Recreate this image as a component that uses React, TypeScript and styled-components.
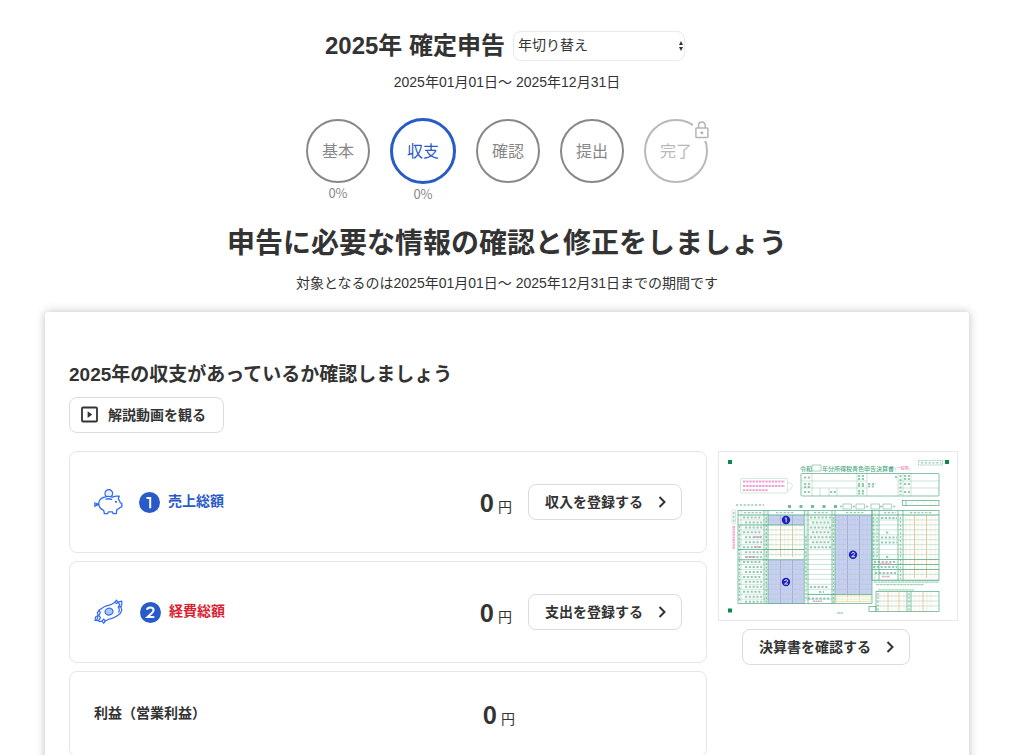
import React from "react";
import styled, { createGlobalStyle, css } from "styled-components";

const GlobalStyle = createGlobalStyle`
  *, *::before, *::after { box-sizing: border-box; }
  body {
    margin: 0;
    background: #fff;
    color: #333;
    font-family: "Liberation Sans", "Noto Sans CJK JP", sans-serif;
    font-size: 14px;
    line-height: 20px;
  }
  h1, h2, h3, p { margin: 0; }
`;

const Shell = styled.div`
  height: 100vh;
  overflow-y: auto;
  scrollbar-width: none;
  padding: 30px 57px 32px 45px;
`;

const Header = styled.header`
  display: flex;
  flex-direction: column;
  align-items: center;
`;

const TitleRow = styled.div`
  display: flex;
  align-items: center;
  gap: 8px;
  padding-right: 4px;
`;

const PageTitle = styled.h1`
  font-size: 24px;
  line-height: 32px;
  font-weight: 700;
`;

const SelectWrap = styled.div`
  position: relative;
  display: flex;
  width: 172px;
`;

const YearSelect = styled.select`
  appearance: none;
  width: 100%;
  height: 30px;
  padding: 0 16px 2px 4px;
  border: 1px solid #e9e9e9;
  border-radius: 8px;
  background: #fff;
  color: #333;
  font: inherit;
`;

const SelectArrows = styled.svg`
  position: absolute;
  right: 2px;
  top: 10px;
  pointer-events: none;
`;

const Period = styled.p`
  margin-top: 10px;
`;

const Steps = styled.ol`
  display: flex;
  justify-content: center;
  gap: 20px;
  height: 86px;
  margin: 26px 0 0;
  padding: 0;
  list-style: none;
`;

type StepState = "done" | "active" | "locked";

const StepItem = styled.li<{ $state: StepState }>`
  position: relative;
  display: flex;
  flex-direction: column;
  align-items: center;
  padding-top: ${(p) => (p.$state === "active" ? 0 : 1)}px;
  color: ${(p) => (p.$state === "locked" ? "#b9b9b9" : "#888")};
  font-family: "Noto Sans CJK JP", sans-serif;
  font-size: 13px;
`;

const StepCircle = styled.button<{ $state: StepState }>`
  width: 64px;
  height: 64px;
  padding: 0 0 2px;
  border: 2px solid currentColor;
  border-radius: 50%;
  background: #fff;
  color: inherit;
  font-family: inherit;
  font-size: 16px;
  ${(p) =>
    p.$state === "active" &&
    css`
      width: 66px;
      height: 66px;
      border-width: 3px;
      color: #285ac8;
    `}
`;

const LockBadge = styled.span`
  position: absolute;
  top: 3px;
  right: -2px;
  display: flex;
  padding: 0 1px 2px 2px;
  border-radius: 4px;
  background: #fff;
`;

const Lead = styled.h2`
  margin-top: 20px;
  font-size: 28px;
  line-height: 40px;
  font-weight: 700;
`;

const LeadNote = styled.p`
  margin-top: 9px;
`;

const Card = styled.main`
  margin-top: 19px;
  padding: 49px 11px 40px 24px;
  border-radius: 3px;
  background: #fff;
  box-shadow: 0 0 10px rgba(0, 0, 0, 0.25);
`;

const SectionTitle = styled.h3`
  font-size: 19px;
  line-height: 28px;
  font-weight: 700;
`;

const OutlineButton = styled.button<{ $video?: boolean }>`
  display: inline-flex;
  align-items: center;
  gap: 7px;
  height: 36px;
  padding: ${(p) => (p.$video ? "0 17px 0 9px" : "0 7px 0 16px")};
  border: 1px solid #dcdcdc;
  border-radius: 8px;
  background: #fff;
  color: #333;
  font-family: inherit;
  font-size: 14px;
  font-weight: 700;
  white-space: nowrap;
`;

const ButtonText = styled.span`
  padding-bottom: 2px;
`;

const VideoLine = styled.div`
  margin-top: 8px;
  display: flex;
`;

const Columns = styled.div`
  display: flex;
  align-items: flex-start;
  gap: 11px;
  margin-top: 18px;
`;

const Summary = styled.div`
  flex: 1;
  display: flex;
  flex-direction: column;
  gap: 8px;
`;

const SummaryRow = styled.section<{ $short?: boolean }>`
  display: flex;
  align-items: center;
  min-height: ${(p) => (p.$short ? 86 : 102)}px;
  padding: 0 24px;
  border: 1px solid #e6e6e6;
  border-radius: 8px;
`;

const RowIcon = styled.svg`
  flex: none;
  margin-right: 16px;
`;

const NumberBadge = styled.svg`
  flex: none;
  margin-right: 8px;
`;

const RowLabel = styled.span<{ $color: string }>`
  flex: 1;
  padding-bottom: 2px;
  color: ${(p) => p.$color};
  font-weight: 700;
`;

const Amount = styled.p<{ $last?: boolean }>`
  display: flex;
  align-items: baseline;
  gap: 4px;
  margin-right: ${(p) => (p.$last ? 167 : 16)}px;
`;

const AmountValue = styled.strong`
  font-family: "Noto Sans CJK JP", sans-serif;
  font-size: 24px;
  line-height: 32px;
`;

const Preview = styled.aside`
  flex: none;
  width: 240px;
`;

const PreviewFrame = styled.div`
  display: flex;
  height: 170px;
  border: 1px solid #e8e8e8;
`;

const PreviewAction = styled.div`
  margin-top: 8px;
  padding-left: 24px;
`;

const Chevron = () => (
  <svg width="24" height="24" viewBox="0 0 24 24" aria-hidden="true">
    <path d="M9.5 7l5 5-5 5" fill="none" stroke="#333" strokeWidth="2" />
  </svg>
);

const PlayBox = () => (
  <svg width="22" height="22" viewBox="0 0 22 22" aria-hidden="true">
    <rect x="3" y="3.5" width="15" height="14" rx="1" fill="none" stroke="#333" strokeWidth="1.8" />
    <path d="M8.6 7.2v6.8l4.6-3.4z" fill="#333" />
  </svg>
);

const Lock = () => (
  <svg width="14" height="18" viewBox="0 0 14 18" fill="none" stroke="#b5b5b5" strokeWidth="1.5" aria-hidden="true">
    <rect x="0.9" y="7" width="12" height="9.6" rx="0.8" />
    <path d="M3.6 7V4.2a3.300 3.300 0 0 1 6.600 0V7" />
    <circle cx="6.900" cy="11.800" r="1.500" fill="#b5b5b5" stroke="none" />
  </svg>
);

const PiggyIcon = () => (
  <RowIcon width="29" height="28" viewBox="0 0 29 28" fill="none" stroke="#2f6bee" strokeWidth="1.300" strokeLinejoin="round" strokeLinecap="round" aria-hidden="true">
    <path d="M12.100 8.200a3.800 3.800 0 1 1 5.400 0" fill="#eaf1ff" />
    <path d="M11.200 8.800c2.400-.7 4.700-.6 7.400.3 1.800-1 4.200-1.200 6.700-.9-.8 1.100-1 2.200-.7 3.400 1 .9 1.400 2 1.700 3.200l1.500.5v3.600c-1.300.2-2.200.8-3 1.500-.6.6-1.200 1.100-2 1.500l-.5 3.700h-3.200l-.7-1.800h-3.900l-.8 1.800h-3.300l-.7-3.200C6.500 21 4.700 18.800 4.700 15.800c0-3.500 2.700-6.100 6.500-7z" />
    <path d="M12 11.200c1.800-.6 3.700-.6 5.600.2M4.700 16.600c-1.500.5-2.600.1-2.400-.8.3-.9 1.600-.3.800.9-.5.900-1.300 1.300-2.300 1.200M.9 14.600v3.800" />
    <circle cx="22" cy="13.800" r="1.100" fill="#2f6bee" stroke="none" />
  </RowIcon>
);

const MoneyIcon = () => (
  <RowIcon width="30" height="28" viewBox="0 0 30 28" fill="none" stroke="#2f6bee" strokeWidth="1.200" strokeLinejoin="round" strokeLinecap="round" aria-hidden="true">
    <path d="M5 12.300C8.700 9.700 9.900 8.500 13 7.700c3.700-.7 5.300-.9 7.700-3.300.8-1 1.200-1.500 1.700-2.300l1.700 2 3.700-1v3.500l-.9 2 .9 3.700-1.400 3c-3.200 2.600-4.600 4-7.700 4.800-3.500.8-5.300 1.300-7.700 3.200L9.800 25.300l-1.700-2.100-2.900.5-.9-1.500-3.300.3.600-3.500 2.700-1.800-1-2.300z" />
    <path d="M5 12.300l1.300 2.300-1.400 2.900 1.500 2.100-1.500 2.500M4.100 18l-1.200 3.400M8.100 23.200l1.600-2.200 1.500 2.100M20.700 4.400l2 1.200 1.400-1.500 1.600 2.500-1.500 2.400 1.200 2.400-.6 3M24.600 9.100l2.300-.5" />
    <ellipse cx="15" cy="13.600" rx="4" ry="3.400" fill="#a9c5fa" transform="rotate(-12 15 13.600)" />
  </RowIcon>
);

const Badge = ({ n }: { n: number }) => (
  <NumberBadge width="21" height="21" viewBox="0 0 21 21" role="img" aria-label={String(n)}>
    <circle cx="10.500" cy="10.500" r="10.500" fill="#285ac8" />
    {n === 1 ? (
      <path d="M7.500 6h3.700v10.300" fill="none" stroke="#fff" strokeWidth="2" />
    ) : (
      <path d="M6.900 7.700c.3-1.400 1.600-2.300 3.400-2.300 2 0 3.300 1 3.300 2.700 0 1.400-.8 2.300-2.300 3.500l-3.700 3.400h6.700" fill="none" stroke="#fff" strokeWidth="2" />
    )}
  </NumberBadge>
);

const GREEN = "#4fa981";
const PALE = "#a5d3bd";
const ORANGE = "#f6dcb8";
const PINK = "#f27cc0";

const range = (from: number, to: number, step: number) => {
  const out: number[] = [];
  for (let v = from; v <= to + 0.01; v += step) out.push(v);
  return out;
};

const hLines = (ys: number[], x1: number, x2: number) => ys.map((y) => `M${x1} ${y}H${x2}`).join("");
const vLines = (xs: number[], y1: number, y2: number) => xs.map((x) => `M${x} ${y1}V${y2}`).join("");

const FormDrawing = () => (
  <svg width="100%" height="100%" viewBox="1 1 238 168" fill="none" role="img" aria-label="青色申告決算書">
    <g fill="#0b8a4a">
      <rect x="10" y="9" width="4" height="4" />
      <rect x="227" y="9" width="4" height="4" />
      <rect x="10" y="157.500" width="4" height="4" />
    </g>

    <g fill={GREEN} fontSize="6" fontWeight="500" fontFamily="Noto Sans CJK JP, sans-serif">
      <text x="82" y="19.500">令和</text>
      <text x="104" y="19.500">年分所得税青色申告決算書</text>
      <text x="177" y="18.800" fontSize="4" fill={PINK}>(一般用)</text>
    </g>

    <g fill="#c9cff3">
      <rect x="50" y="64" width="36" height="10" />
      <rect x="50" y="109" width="36" height="44" />
      <rect x="117" y="64" width="37" height="79" />
    </g>

    <path
      stroke={ORANGE}
      strokeWidth="0.500"
      d={
        vLines([50.8, 54, 58, 66.500, 70, 78, 82], 74, 106) +
        vLines([120, 124, 133, 137, 145, 149], 144, 151) +
        vLines([188, 192, 200, 204, 213, 217], 64, 127) +
        vLines([162, 166, 174, 178, 186, 197, 201, 209, 213], 141, 160) +
        vLines([194, 200, 206, 212, 217], 50, 54)
      }
    />
    <path stroke="#f0b878" strokeWidth="0.800" d={vLines([62.500, 74.500], 74, 106) + vLines([129.500, 141.500], 144, 151) + vLines([196.500, 208.500], 64, 127) + vLines([170, 181, 205], 141, 160)} />
    <path stroke="#a49bc4" strokeWidth="0.700" d={vLines([62.500, 74.500], 64, 74) + vLines([62.500, 74.500], 109, 153) + vLines([129.500, 141.500], 64, 143)} />
    <path stroke="#bcc0e8" strokeWidth="0.400" d={vLines([54, 58, 66, 70, 78, 82], 109, 153) + vLines([121, 125, 133, 137, 145, 149], 64, 143)} />

    <path
      stroke={PALE}
      strokeWidth="0.600"
      d={
        hLines(range(64, 153, 4.950), 20, 86) +
        hLines(range(64, 149, 4.950), 88, 154) +
        hLines(range(64, 129, 4.950), 154, 221) +
        hLines([145, 150, 155], 158, 221) +
        hLines([30, 37], 83, 149) +
        hLines([30, 37], 180, 221) +
        vLines([23, 48], 59, 153) +
        vLines([88, 157], 59, 129) +
        vLines([94, 139, 149, 180, 185, 193], 22, 45) +
        "M111 37V45M119 37V45M102 37V45"
      }
    />
    <g stroke={GREEN} strokeWidth="0.700">
      <rect x="20" y="59.500" width="134" height="93" />
      <rect x="154" y="59.500" width="67" height="70" />
      <rect x="83" y="22.500" width="138" height="22.500" rx="1" />
      <rect x="158" y="140.500" width="63" height="20" />
      <rect x="151" y="155.500" width="7" height="5" />
      <rect x="184.500" y="49.500" width="36.500" height="5" />
      <rect x="94" y="14" width="9" height="6" strokeWidth="0.500" />
      <path
        d={
          hLines([64], 20, 221) +
          hLines([74, 98.500, 108.800], 20, 86) +
          hLines([143.500], 90, 154) +
          hLines([108.500, 113.500, 118.500], 154, 221) +
          vLines([46, 50, 86.300], 59.500, 152.500) +
          vLines([90, 114, 117], 59.500, 152.500) +
          vLines([161, 180, 185], 59.500, 129) +
          vLines([189, 193], 140.500, 160.500) +
          "M188 49.500V54.500"
        }
      />
    </g>
    <rect x="118" y="145" width="35" height="5.500" fill="#fffbe8" fillOpacity="0.500" stroke="#d8cf7c" strokeWidth="0.500" />

    <g stroke={GREEN} strokeWidth="0.500">
      <rect x="125" y="53" width="8.500" height="5" />
      <rect x="138" y="53" width="8.500" height="5" />
      <rect x="153" y="53" width="8.500" height="5" />
      <rect x="165" y="53" width="8.500" height="5" />
      <rect x="200.500" y="9.500" width="24" height="4.500" strokeDasharray="2 0.600" />
      <rect x="14" y="59" width="3.500" height="14" rx="1" stroke={PALE} />
      <path stroke={PALE} d="M24 27.500h44q1.500 0 1.500 1.500v11.500q0 1.500-1.500 1.500H24q-1.500 0-1.500-1.500V29q0-1.500 1.500-1.500M69.500 31.500q4.500 0 5 3-.5 4-5 5.500" />
    </g>

    <g stroke={GREEN} strokeWidth="2" strokeDasharray="2.200 1.600" opacity="0.600">
      <path d={range(66.500, 151, 4.950).map((y, i) => `M${i % 3 === 0 ? 25 : 27} ${y}H44`).join("")} />
      <path d={range(66.500, 100, 4.950).map((y, i) => `M${i % 2 ? 94 : 92} ${y}H113`).join("")} />
      <path d="M92 136H110M101 141H106M90 147.500H113M163 67H179M168 81.500H172M163 86.500H179M163 91.500H179M168 106H172M156 111H179M155 116H179M157 122H178" />
      <path d="M26 61.700H44M58 61.700H76M96 61.700H110M128 61.700H146M166 61.700H178M192 61.700H214" strokeWidth="1.200" />
      <path d="M86 26.500H92M86 33H92M86 36H92M86 41H92M112 41H118M140 25H147M140 28H147M140 33H147M140 35H147M140 40H147M140 42.500H147M150 33H158M150 35.500H156M177 26H179M186 25H192M186 28H192M186 33H192M186 41H192M182.500 24V44" />
      <path d="M203 11.800H223M122 55.500H124M135 55.500H137M148 55.500H152M162 55.500H165M175 55.500H178M18 54H46" strokeWidth="1.300" />
      <path d="M48.300 66V152M115.500 66V152M182.500 66V128M159 66V108M155.500 66V108M191 142V160M160 142V160M15.800 61V72M21.500 75V150M88 85V150" strokeWidth="1.300" />
    </g>
    <path stroke={GREEN} strokeWidth="2.800" strokeDasharray="3 8.500" d="M70 55.500H122" opacity="0.800" />
    <path stroke={PALE} strokeWidth="1.300" strokeDasharray="3 0.400" d="M156 131.200H221M158 133.700H206M160 138.800H196M119 162H125" />
    <path stroke={PINK} strokeWidth="1.800" strokeDasharray="2.300 0.900" d="M25 30.500H67M25 35H67M25 39.200H50" opacity="0.750" />
    <path stroke={PINK} strokeWidth="2.500" strokeDasharray="2 0.600" d="M15.700 75V98" opacity="0.650" />
    <path stroke={PINK} strokeWidth="1.400" strokeDasharray="2 0.500" d="M36 86H44M36 96H44M28 106H38M95 150.300H104M162 113H173M164 125.500H172" opacity="0.800" />

    {[
      { x: 68, y: 69, n: 1 },
      { x: 68, y: 131, n: 2 },
      { x: 135, y: 103.7, n: 2 },
    ].map((m) => (
      <g key={`${m.x}-${m.y}`}>
        <circle cx={m.x} cy={m.y} r="4.200" fill="#1c22b8" />
        <path
          d={
            m.n === 1
              ? `M${m.x - 1.2} ${m.y - 1.4}l1.400-.8v4.600`
              : `M${m.x - 1.6} ${m.y - 1}c.3-1.600 3.200-1.600 3.200 0 0 1.100-1.800 1.700-3 3h3.400`
          }
          stroke="#fff"
          strokeWidth="0.900"
        />
      </g>
    ))}
  </svg>
);

const steps: { label: string; state: StepState; percent?: string }[] = [
  { label: "基本", state: "done", percent: "0%" },
  { label: "収支", state: "active", percent: "0%" },
  { label: "確認", state: "done" },
  { label: "提出", state: "done" },
  { label: "完了", state: "locked" },
];

export default function App() {
  return (
    <>
      <GlobalStyle />
      <Shell>
        <Header>
          <TitleRow>
            <PageTitle>2025年 確定申告</PageTitle>
            <SelectWrap>
              <YearSelect aria-label="年切り替え" defaultValue="">
                <option value="">年切り替え</option>
                <option value="2025">2025年</option>
                <option value="2024">2024年</option>
              </YearSelect>
              <SelectArrows width="4" height="10" viewBox="0 0 4 10" fill="#333" aria-hidden="true">
                <path d="M0 4l2-4 2 4zM0 6h4l-2 4z" />
              </SelectArrows>
            </SelectWrap>
          </TitleRow>
          <Period>2025年01月01日～ 2025年12月31日</Period>
          <Steps>
            {steps.map((s) => (
              <StepItem key={s.label} $state={s.state}>
                <StepCircle type="button" $state={s.state}>
                  {s.label}
                </StepCircle>
                {s.percent}
                {s.state === "locked" && (
                  <LockBadge>
                    <Lock />
                  </LockBadge>
                )}
              </StepItem>
            ))}
          </Steps>
          <Lead>申告に必要な情報の確認と修正をしましょう</Lead>
          <LeadNote>対象となるのは2025年01月01日～ 2025年12月31日までの期間です</LeadNote>
        </Header>

        <Card>
          <SectionTitle>2025年の収支があっているか確認しましょう</SectionTitle>
          <VideoLine>
            <OutlineButton type="button" $video>
              <PlayBox />
              <ButtonText>解説動画を観る</ButtonText>
            </OutlineButton>
          </VideoLine>
          <Columns>
            <Summary>
              <SummaryRow>
                <PiggyIcon />
                <Badge n={1} />
                <RowLabel $color="#285ac8">売上総額</RowLabel>
                <Amount>
                  <AmountValue>0</AmountValue>円
                </Amount>
                <OutlineButton type="button">
                  <ButtonText>収入を登録する</ButtonText>
                  <Chevron />
                </OutlineButton>
              </SummaryRow>
              <SummaryRow>
                <MoneyIcon />
                <Badge n={2} />
                <RowLabel $color="#dc1e32">経費総額</RowLabel>
                <Amount>
                  <AmountValue>0</AmountValue>円
                </Amount>
                <OutlineButton type="button">
                  <ButtonText>支出を登録する</ButtonText>
                  <Chevron />
                </OutlineButton>
              </SummaryRow>
              <SummaryRow $short>
                <RowLabel $color="#333">利益（営業利益）</RowLabel>
                <Amount $last>
                  <AmountValue>0</AmountValue>円
                </Amount>
              </SummaryRow>
            </Summary>
            <Preview>
              <PreviewFrame>
                <FormDrawing />
              </PreviewFrame>
              <PreviewAction>
                <OutlineButton type="button">
                  <ButtonText>決算書を確認する</ButtonText>
                  <Chevron />
                </OutlineButton>
              </PreviewAction>
            </Preview>
          </Columns>
        </Card>
      </Shell>
    </>
  );
}
